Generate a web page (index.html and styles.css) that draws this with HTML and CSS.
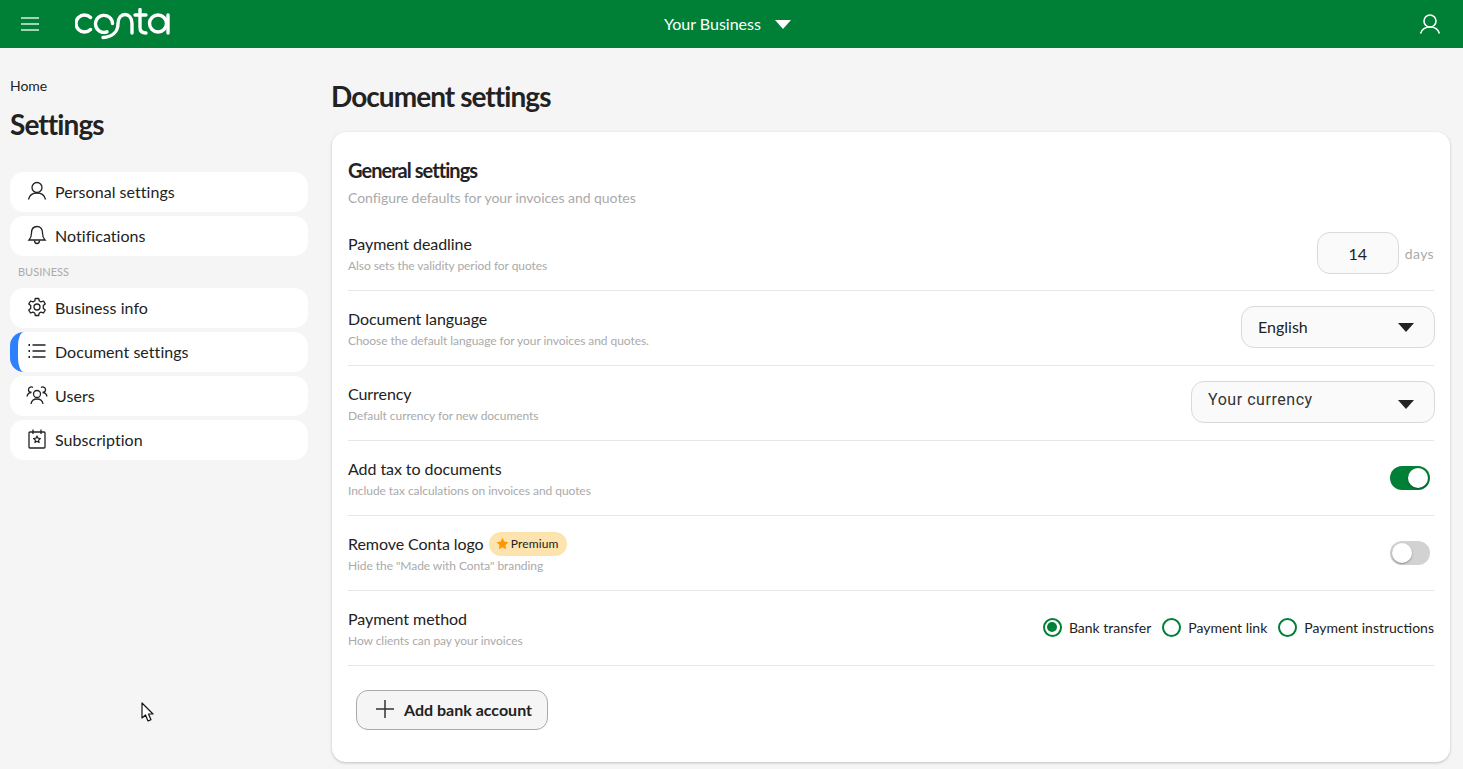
FILE: index.html
```html
<!DOCTYPE html>
<html>
<head>
<meta charset="UTF-8">
<meta name="viewport" content="width=device-width, initial-scale=1.0">
<title>Document settings</title>
<link rel="stylesheet" href="styles.css">
</head>
<body>

<header class="topbar">
  <div class="topbar-left">
    <svg class="burger" width="18" height="14" viewBox="0 0 18 14"><path d="M0 1h18M0 7h18M0 13h18" stroke="#d8efe0" stroke-width="1.6" fill="none"/></svg>
    <svg class="logo" width="96" height="32" viewBox="0 0 96 32" fill="none" stroke="#fff" stroke-width="3.4" stroke-linecap="round" role="img" aria-label="Conta">
      <path d="M15.500 9.500A8.500 8.500 0 1 0 15.500 21.500"/>
      <path d="M32 23.800A8.500 8.500 0 1 1 37.500 15.500"/>
      <path d="M28 29.500C37 29 43 24 43 15.500C43 3.500 57 3.500 57 15.500V25"/>
      <path d="M65 1.500V19.500C65 23.500 67 25 71 25M60 7H71"/>
      <circle cx="83" cy="15.500" r="8.500"/>
      <path d="M93 7V25"/>
    </svg>
  </div>
  <div class="business">Your Business <span class="caret caret-white"></span></div>
  <svg class="top-user" width="22" height="20" viewBox="0 0 22 20" fill="none" stroke="#fff" stroke-width="1.6"><circle cx="11" cy="7" r="6"/><path d="M1.500 19.500C3 15 6.500 13 11 13s8 2 9.500 6.500"/></svg>
</header>

<div class="page">
  <aside class="sidebar">
    <div class="crumb">Home</div>
    <h1 class="side-title">Settings</h1>

    <a class="nav-item">
      <svg class="nav-icon" viewBox="0 0 20 20"><circle cx="10" cy="6.500" r="5"/><path d="M1.500 18.500c1-4.500 4-6.500 8.500-6.500s7.500 2 8.500 6.500"/></svg>
      Personal settings
    </a>
    <a class="nav-item">
      <svg class="nav-icon" viewBox="0 0 20 20"><path d="M10 1.500c-3.500 0-5.500 2.500-5.500 6.500 0 4-1 5.500-2.500 7h16c-1.500-1.500-2.500-3-2.500-7 0-4-2-6.500-5.500-6.500z"/><path d="M7.500 15.500c0 4 5 4 5 0"/></svg>
      Notifications
    </a>
    <div class="nav-label">BUSINESS</div>
    <a class="nav-item">
      <svg class="nav-icon" viewBox="0 0 20 20"><circle cx="10" cy="10" r="3"/><path d="M8.300 1.500h3.400l.6 2.500 1.800.9 2.400-.9 1.700 2.900-1.900 1.700v2.800l1.900 1.700-1.700 2.900-2.400-.9-1.800.9-.6 2.500H8.300l-.6-2.500-1.800-.9-2.400.9-1.700-2.900 1.900-1.700V8.600L1.800 6.900l1.700-2.900 2.400.9 1.800-.9z" stroke-linejoin="round"/></svg>
      Business info
    </a>
    <a class="nav-item nav-active">
      <svg class="nav-icon" viewBox="0 0 20 20"><path d="M5.500 4h13M5.500 10h13M5.500 16h13"/><path d="M1.500 4h1.500M1.500 10h1.500M1.500 16h1.500" stroke-width="2"/></svg>
      Document settings
    </a>
    <a class="nav-item">
      <svg class="nav-icon nav-icon-wide" viewBox="0 0 22 20"><circle cx="11" cy="9" r="3.500"/><path d="M5 19c.5-3.500 3-5 6-5s5.500 1.500 6 5"/><path d="M7 2.500a2.800 2.800 0 1 0-1.500 5C3 7.500 1.500 9 1 11.500"/><path d="M15 2.500a2.800 2.800 0 1 1 1.500 5c2.500 0 4 1.500 4.500 4"/></svg>
      Users
    </a>
    <a class="nav-item">
      <svg class="nav-icon" viewBox="0 0 20 20"><rect x="2" y="3" width="16" height="16" rx="1"/><path d="M6 .5v4.500M14 .5v4.500"/><path d="M10 7l1 2.200 2.400.3-1.800 1.600.5 2.400-2.100-1.200-2.100 1.200.5-2.400-1.800-1.600 2.400-.3z" stroke-width="1.200" stroke-linejoin="round"/></svg>
      Subscription
    </a>
  </aside>

  <main class="content">
    <h1 class="page-title">Document settings</h1>

    <section class="card">
      <h2 class="card-title">General settings</h2>
      <p class="card-sub">Configure defaults for your invoices and quotes</p>

      <div class="row">
        <div class="row-text">
          <div class="row-name">Payment deadline</div>
          <div class="row-hint">Also sets the validity period for quotes</div>
        </div>
        <div class="days">
          <div class="field field-num">14</div>
          <span class="days-unit">days</span>
        </div>
      </div>

      <div class="row">
        <div class="row-text">
          <div class="row-name">Document language</div>
          <div class="row-hint">Choose the default language for your invoices and quotes.</div>
        </div>
        <div class="field field-select field-lang"><span class="lang-text">English</span> <span class="caret"></span></div>
      </div>

      <div class="row">
        <div class="row-text">
          <div class="row-name">Currency</div>
          <div class="row-hint">Default currency for new documents</div>
        </div>
        <div class="field field-select field-currency"><span class="currency-text">Your currency</span> <span class="caret"></span></div>
      </div>

      <div class="row">
        <div class="row-text">
          <div class="row-name">Add tax to documents</div>
          <div class="row-hint">Include tax calculations on invoices and quotes</div>
        </div>
        <div class="toggle toggle-on"><span class="knob"></span></div>
      </div>

      <div class="row">
        <div class="row-text">
          <div class="row-name">Remove Conta logo
            <span class="premium">
              <svg width="13" height="13" viewBox="0 0 24 24"><path d="M12 1.500l3.300 7 7.700 1-5.600 5.300 1.400 7.700-6.800-3.700-6.800 3.700 1.400-7.700L1 9.500l7.700-1z" fill="#ff9800"/></svg>
              Premium
            </span>
          </div>
          <div class="row-hint">Hide the "Made with Conta" branding</div>
        </div>
        <div class="toggle"><span class="knob"></span></div>
      </div>

      <div class="row">
        <div class="row-text">
          <div class="row-name">Payment method</div>
          <div class="row-hint">How clients can pay your invoices</div>
        </div>
        <div class="radios">
          <label class="radio radio-on"><span class="radio-dot"></span>Bank transfer</label>
          <label class="radio"><span class="radio-dot"></span>Payment link</label>
          <label class="radio"><span class="radio-dot"></span>Payment instructions</label>
        </div>
      </div>

      <button class="add-btn">
        <svg width="18" height="18" viewBox="0 0 18 18"><path d="M9 0v18M0 9h18" stroke="#333" stroke-width="1.500"/></svg>
        Add bank account
      </button>
    </section>
  </main>
</div>

<!-- mouse pointer from the screenshot -->
<svg class="pointer" width="14" height="21" viewBox="0 0 14 21"><path d="M1 1v15l3.500-3 2.500 6 3-1.200-2.500-5.800H12z" fill="#fff" stroke="#111" stroke-width="1.200" stroke-linejoin="round"/></svg>

</body>
</html>
```

FILE: styles.css
```css
body{
    font-family:"Lato","Liberation Sans",sans-serif;
    margin:0;
    background:#f5f5f5;
    color:#222;
    font-size:16px;
}

/* TOP BAR */
.topbar{
    height:48px;
    background:#008037;
    color:white;
    display:flex;
    align-items:center;
    justify-content:space-between;
    padding:0 22px 0 21px;
    position:relative;
}

.topbar-left{
    display:flex;
    align-items:center;
    gap:36px;
}

.business{
    position:absolute;
    left:664px;
    top:0;
    line-height:48px;
    font-size:16px;
    display:flex;
    align-items:center;
    gap:14px;
}

.caret{
    display:inline-block;
    width:0;
    height:0;
    border-left:8.5px solid transparent;
    border-right:8.5px solid transparent;
    border-top:9px solid #222;
}

.caret-white{border-top-color:white;}

/* LAYOUT */
.page{
    display:flex;
    gap:24px;
    padding:0 13px 7px 10px;
}

.sidebar{
    width:298px;
    flex:none;
}

.crumb{
    font-size:14px;
    line-height:20px;
    margin-top:28px;
    letter-spacing:-0.05px;
}

.side-title{
    font-size:28px;
    line-height:36px;
    font-weight:700;
    letter-spacing:-0.9px;
    margin:10px 0 30px;
}

.nav-item{
    display:flex;
    align-items:center;
    gap:8px;
    height:40px;
    background:white;
    border-radius:14px;
    padding:0 0 2px 17px;
    margin-bottom:4px;
    box-sizing:border-box;
    letter-spacing:0.05px;
}

.nav-active{
    border-left:8px solid #2f80ff;
    padding-left:9px;
}

.nav-icon{
    width:20px;
    height:20px;
    fill:none;
    stroke:#222;
    stroke-width:1.3;
    flex:none;
}

.nav-icon-wide{
    width:22px;
    margin:0 -1px;
}

.nav-label{
    font-size:11px;
    line-height:16px;
    color:#aaa;
    margin:8px 0 8px 8px;
}

/* CONTENT */
.content{flex:1;}

.page-title{
    font-size:28px;
    line-height:36px;
    font-weight:700;
    letter-spacing:-0.95px;
    margin:30px 0 18px -1px;
}

.card{
    background:white;
    border-radius:14px;
    padding:24px 16px 32px;
    box-shadow:0 1px 3px rgba(0,0,0,0.22);
}

.card-title{
    font-size:20px;
    line-height:28px;
    font-weight:700;
    letter-spacing:-0.95px;
    margin:0;
}

.card-sub{
    font-size:14px;
    line-height:20px;
    color:#aaa;
    margin:4px 0 8px;
    letter-spacing:-0.04px;
}

.row{
    display:flex;
    align-items:center;
    justify-content:space-between;
    height:75px;
    box-sizing:border-box;
    border-bottom:1px solid #e6e6e6;
}

.row-name{
    font-size:16px;
    line-height:24px;
    letter-spacing:-0.07px;
}

.row-hint{
    font-size:12px;
    line-height:16px;
    color:#aaa;
    margin-top:2px;
    letter-spacing:-0.06px;
}

.days{
    display:flex;
    align-items:center;
    gap:6px;
}

.days-unit{
    font-size:14px;
    color:#aaa;
    letter-spacing:0.35px;
}

.field{
    height:42px;
    box-sizing:border-box;
    background:#fafafa;
    border:1px solid #d9d9d9;
    border-radius:13px;
    display:flex;
    align-items:center;
}

.field-num{
    width:82px;
    justify-content:center;
}

.field-select{
    justify-content:space-between;
    padding:0 20px 0 16px;
    margin:0 -1px 2px 0;
}

.field-lang{width:194px;}
.field-currency{width:244px;}

.lang-text{margin-top:-2px;}

.currency-text{
    font-family:"Roboto",sans-serif;
    letter-spacing:0.55px;
    margin-top:-5px;
    color:#333;
}

.field-currency .caret{margin-top:4px;}

/* TOGGLES */
.toggle{
    width:40px;
    height:24px;
    margin-right:4px;
    border-radius:12px;
    background:#d2d2d2;
    position:relative;
}

.toggle-on{background:#008037;}

.knob{
    position:absolute;
    top:2px;
    left:2px;
    width:20px;
    height:20px;
    border-radius:50%;
    background:white;
    box-shadow:0 1px 2px rgba(0,0,0,0.35);
}

.toggle-on .knob{left:18px;}

/* PREMIUM */
.premium{
    display:inline-flex;
    align-items:center;
    gap:2px;
    height:24px;
    margin:-6px 0 -2px 1px;
    padding:0 8px 0 7px;
    border-radius:12px;
    background:#fde3ae;
    font-size:12px;
    letter-spacing:0.15px;
    vertical-align:middle;
}

/* RADIOS */
.radios{
    display:flex;
    gap:11px;
    margin-bottom:2px;
}

.radio{
    display:flex;
    align-items:center;
    gap:7px;
    font-size:14px;
}

.radio-dot{
    width:19px;
    height:19px;
    box-sizing:border-box;
    border:2px solid #008037;
    border-radius:50%;
    display:flex;
    align-items:center;
    justify-content:center;
}

.radio-on .radio-dot::after{
    content:"";
    width:10px;
    height:10px;
    border-radius:50%;
    background:#008037;
}

/* BUTTON */
.add-btn{
    display:flex;
    align-items:center;
    gap:10px;
    margin:24px 0 0 8px;
    width:192px;
    height:40px;
    padding:0 0 2px 19px;
    box-sizing:border-box;
    font-family:inherit;
    font-size:16px;
    font-weight:700;
    color:#222;
    background:#f5f5f5;
    border:1px solid #aaa;
    border-radius:12px;
}

.pointer{
    position:absolute;
    left:141px;
    top:702px;
}
```
